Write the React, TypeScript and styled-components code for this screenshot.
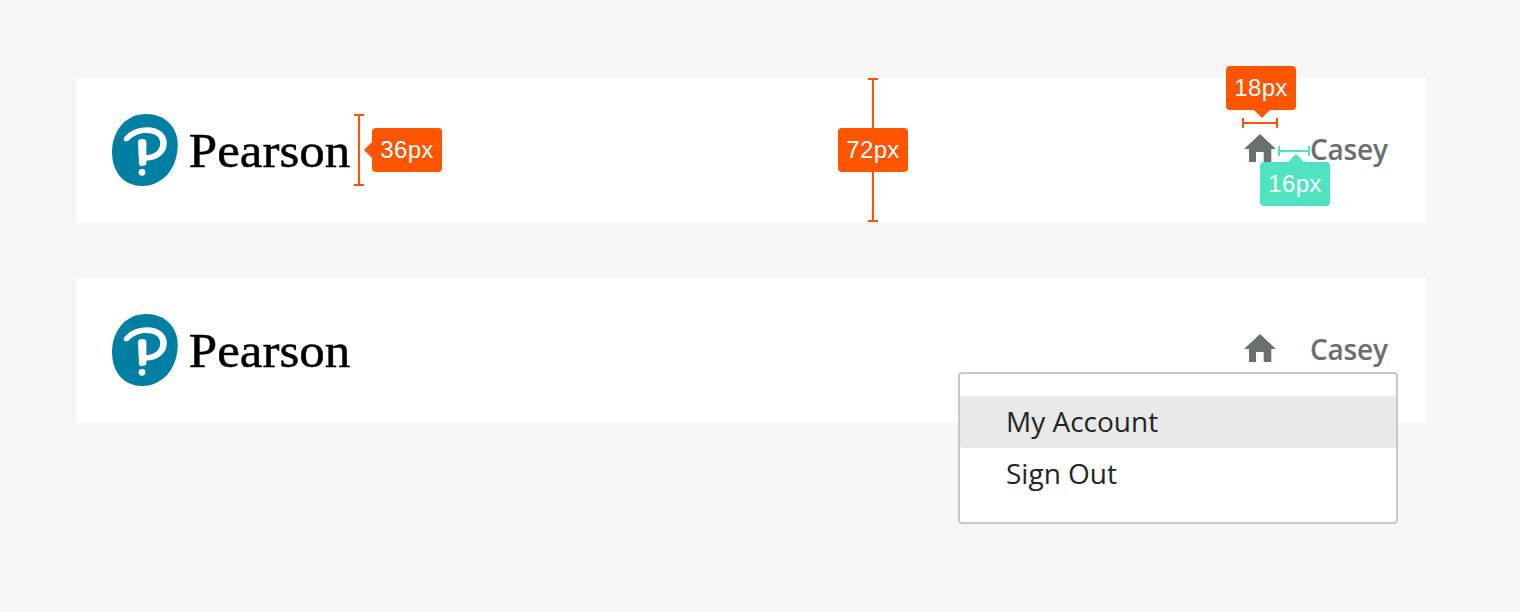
import React from 'react';
import styled, { createGlobalStyle } from 'styled-components';

const ORANGE = '#ff5500';
const MINT = '#50e3c2';

const GlobalStyle = createGlobalStyle`
  *, *::before, *::after { box-sizing: border-box; }
  body {
    margin: 0;
    background: #f6f6f6;
    font-family: 'Open Sans', sans-serif;
  }
`;

const Page = styled.main`
  display: flex;
  flex-direction: column;
  gap: 56px;
  width: 1520px;
  height: 612px;
  padding: 78px 94px 0 76px;
  overflow: hidden;
`;

const HeaderBar = styled.header`
  position: relative;
  display: flex;
  align-items: center;
  justify-content: space-between;
  height: 144px;
  padding: 0 38px 0 36px;
  background: #fff;
`;

const Brand = styled.a`
  display: flex;
  align-items: center;
  gap: 10px;
`;

const Emblem = styled.svg`
  display: block;
  width: 66px;
  height: 72px;
`;

const Wordmark = styled.svg`
  display: block;
  width: 166px;
  height: 72px;
  overflow: visible;
  font-family: 'Liberation Serif', serif;
  font-size: 49.5px;
`;

const UserNav = styled.nav`
  display: flex;
  align-items: center;
  gap: 34px;
`;

const HomeIcon = styled.svg`
  display: block;
  width: 32px;
  height: 28px;
  margin-top: -4px;
  fill: #6a7070;
`;

const UserName = styled.span`
  width: 78px;
  margin-top: -2px;
  color: #6a7070;
  font-size: 28px;
  font-weight: 600;
  letter-spacing: -0.2px;
  line-height: 38px;
  white-space: nowrap;
`;

const Menu = styled.ul`
  position: absolute;
  top: 94px;
  right: 28px;
  width: 440px;
  height: 152px;
  margin: 0;
  padding: 22px 0;
  list-style: none;
  background: #fff;
  border: 2px solid #c7c7c7;
  border-radius: 4px;
`;

const MenuItem = styled.li<{ $active?: boolean }>`
  height: 52px;
  padding-left: 46px;
  border-radius: 2px;
  background: ${(p) => (p.$active ? '#e9e9e9' : 'transparent')};
  color: #252525;
  font-size: 28px;
  line-height: 50px;
`;

type Box = { $x: number; $y: number };

const Ruler = styled.div<Box & { $length: number; $vertical?: boolean; $color: string }>`
  position: absolute;
  left: ${(p) => p.$x}px;
  top: ${(p) => p.$y}px;
  width: ${(p) => (p.$vertical ? 10 : p.$length)}px;
  height: ${(p) => (p.$vertical ? p.$length : 10)}px;
  border: 0 solid ${(p) => p.$color};
  border-width: ${(p) => (p.$vertical ? '2px 0' : '0 2px')};

  &::before {
    content: '';
    position: absolute;
    background: ${(p) => p.$color};
    ${(p) =>
      p.$vertical
        ? 'left: 4px; top: 0; bottom: 0; width: 2px;'
        : 'top: 4px; left: 0; right: 0; height: 2px;'}
  }
`;

const arrows = {
  none: 'display: none;',
  left: 'left: -8px; top: 14px; width: 8px; height: 16px; clip-path: polygon(100% 0, 0 50%, 100% 100%);',
  down: 'left: 28px; bottom: -8px; width: 16px; height: 8px; clip-path: polygon(0 0, 100% 0, 50% 100%);',
  up: 'left: 28px; top: -8px; width: 16px; height: 8px; clip-path: polygon(50% 0, 100% 100%, 0 100%);',
};

const SizeTag = styled.div<Box & { $color: string; $arrow: keyof typeof arrows }>`
  position: absolute;
  left: ${(p) => p.$x}px;
  top: ${(p) => p.$y}px;
  width: 70px;
  height: 44px;
  border-radius: 4px;
  background: ${(p) => p.$color};
  color: #fff;
  font-family: 'Liberation Sans', Arial, sans-serif;
  font-size: 24px;
  letter-spacing: 0.35px;
  line-height: 44px;
  text-align: center;

  &::before {
    content: '';
    position: absolute;
    background: ${(p) => p.$color};
    ${(p) => arrows[p.$arrow]}
  }
`;

function Logo() {
  return (
    <Brand aria-label="Pearson">
      <Emblem viewBox="0 0 66 72">
        <path
          fill="#007fa3"
          d="M34 0C52 0 65.7 12 65.7 31C65.7 54 51 72 30 72C12 72 0 58.5 0 38C0 16 14.5 0 34 0Z"
        />
        <path
          fill="#fff"
          d="M12.200 23.500C17.500 16.800 25.500 13.200 35 13.200C46.500 13.200 54.800 19.300 54.800 29C54.800 39.500 46 46.300 34 46.600V41.300C42.500 40.700 48.200 36.500 48.200 29.300C48.200 22.500 43 18.900 34.300 18.900C27 18.900 21.500 21.400 16.600 26.400C15.200 27.700 13.300 27.600 12.200 26.400C11.500 25.500 11.500 24.400 12.200 23.500Z"
        />
        <path
          fill="#fff"
          d="M26 28.300Q26 25 30.200 25Q34.400 25 34.400 28.300V49.500Q34.400 51.300 32.400 51.600L29.400 52Q27 52.200 27 50Z"
        />
        <circle cx="30" cy="58.3" r="3.4" fill="#fff" />
      </Emblem>
      <Wordmark viewBox="0 0 166 72">
        <text x="0.8" y="52.7" textLength="161.5" lengthAdjust="spacingAndGlyphs" stroke="#000" strokeWidth="0.5">
          Pearson
        </text>
      </Wordmark>
    </Brand>
  );
}

function UserControls() {
  return (
    <UserNav>
      <HomeIcon viewBox="0 0 32 28">
        <path d="M16 0L32 15H27.3V28H19.7V18H12V28H5V15H0Z" />
      </HomeIcon>
      <UserName>Casey</UserName>
    </UserNav>
  );
}

export default function App() {
  return (
    <>
      <GlobalStyle />
      <Page>
        <HeaderBar>
          <Logo />
          <UserControls />
          <Ruler $x={278} $y={36} $length={72} $vertical $color={ORANGE} />
          <SizeTag $x={296} $y={50} $color={ORANGE} $arrow="left">36px</SizeTag>
          <Ruler $x={792} $y={0} $length={144} $vertical $color={ORANGE} />
          <SizeTag $x={762} $y={50} $color={ORANGE} $arrow="none">72px</SizeTag>
          <Ruler $x={1166} $y={40} $length={36} $color={ORANGE} />
          <SizeTag $x={1150} $y={-12} $color={ORANGE} $arrow="down">18px</SizeTag>
          <Ruler $x={1202} $y={68} $length={32} $color={MINT} />
          <SizeTag $x={1184} $y={84} $color={MINT} $arrow="up">16px</SizeTag>
        </HeaderBar>
        <HeaderBar>
          <Logo />
          <UserControls />
          <Menu>
            <MenuItem $active>My Account</MenuItem>
            <MenuItem>Sign Out</MenuItem>
          </Menu>
        </HeaderBar>
      </Page>
    </>
  );
}
